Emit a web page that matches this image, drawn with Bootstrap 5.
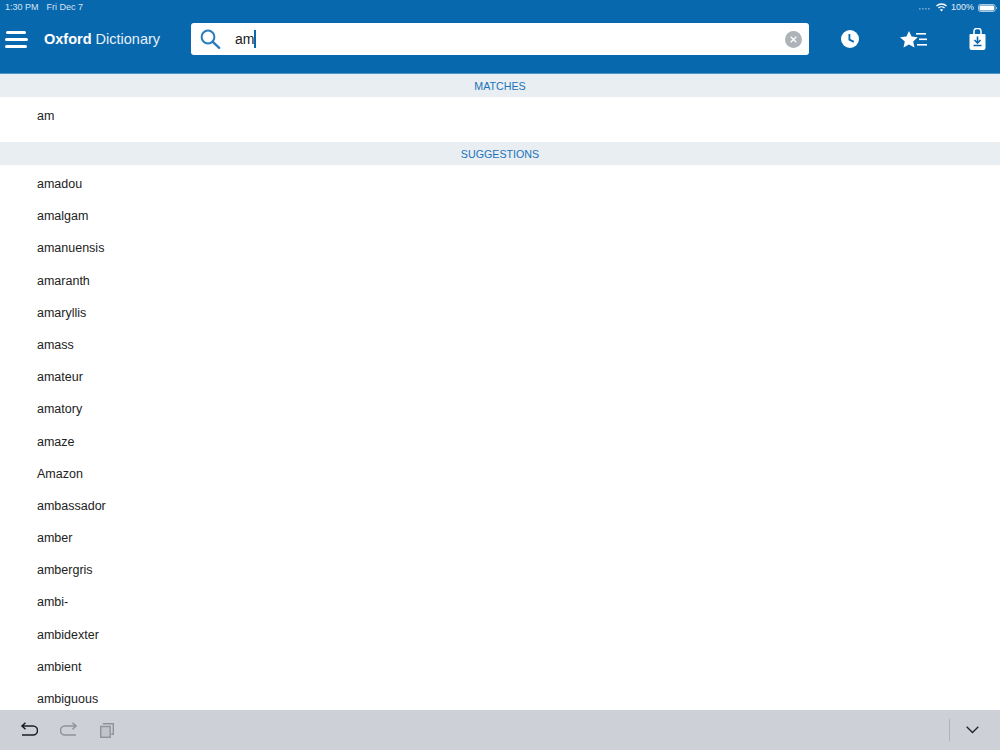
<!DOCTYPE html>
<html lang="en">
<head>
<meta charset="utf-8">
<title>Oxford Dictionary</title>
<link href="https://cdn.jsdelivr.net/npm/bootstrap@5.3.0/dist/css/bootstrap.min.css" rel="stylesheet">
<style>
html,body{height:100%;overflow:hidden}
body{font-family:"Liberation Sans",Arial,sans-serif;color:#222;background:#fff}
.app-shell{height:750px}
.top-head{background:#0868ad;border-bottom:1px solid #4d94c8;height:74px;color:#fff;flex:none}
.status-row{height:15px;font-size:9px;padding:0 0 0 5px;color:#d5e5f2;line-height:15px}
.status-right{color:#e4eef6;padding-right:3px}
.tool-row{height:32px;margin-top:8px}
.menu-btn{width:44px;padding-left:5px}
.brand-name{font-size:14.5px;width:147px;padding-top:1px;color:#e6f0f8;white-space:nowrap}
.brand-name b{color:#fff}
.search-box{width:618px;height:32px;background:#fff;border-radius:3px;padding:0 7px 0 9px}
.search-text{font-size:14px;color:#222;margin-left:14px;line-height:18px}
.caret-bar{display:inline-block;width:1.5px;height:18px;background:#0868ad;vertical-align:-4px}
.tool-icons{flex:1;padding-left:32px;padding-right:14px}
.sec-head{height:23px;line-height:24px;background:#e9eef2;color:#1a73b8;font-size:10.7px;text-align:center;flex:none}
.word-list{margin:0;padding:0;list-style:none}
.word-list li{height:32.19px;line-height:32.19px;padding-left:37px;font-size:12.5px;color:#222}
.match-wrap{padding-top:3px;height:45px;flex:none}
.sugg-wrap{flex:1;min-height:0;overflow:hidden;padding-top:3px}
.key-bar{height:40px;flex:none;background:#cdd0d6;padding:0 21px 0 20px}
.key-left{gap:22px}
.key-sep{width:1px;height:22px;background:#b0b3b9;margin-right:16px}
</style>
</head>
<body>
<div class="app-shell d-flex flex-column">
  <header class="top-head">
    <div class="status-row d-flex justify-content-between">
      <div class="d-flex gap-2"><span>1:30 PM</span><span>Fri Dec 7</span></div>
      <div class="status-right d-flex align-items-center gap-1">
        <svg width="13" height="5" viewBox="0 0 13 5"><g fill="#6ea5cf"><rect x="0" y="3" width="1.6" height="1.6"/><rect x="3" y="3" width="1.6" height="1.6"/><rect x="6" y="3" width="1.6" height="1.6"/><rect x="9" y="3" width="1.6" height="1.6"/></g></svg>
        <svg width="11" height="9" viewBox="0 0 11 9"><path d="M5.5 8.5 3.9 6.7a2.3 2.3 0 0 1 3.2 0ZM2.9 5.6 2 4.6a5 5 0 0 1 7 0l-.9 1a3.7 3.7 0 0 0-5.2 0ZM1 3.6 0 2.6a7.8 7.8 0 0 1 11 0l-1 1a6.4 6.4 0 0 0-9 0Z" fill="#fff"/></svg>
        <span>100%</span>
        <svg width="19" height="8" viewBox="0 0 19 8"><rect x=".5" y=".5" width="16.5" height="7" rx="1.8" fill="none" stroke="#a9cbe4"/><rect x="1.5" y="1.5" width="14.5" height="5" rx="1" fill="#fff"/><path d="M18 2.8c.6.2 1 .6 1 1.2s-.4 1-1 1.2Z" fill="#a9cbe4"/></svg>
      </div>
    </div>
    <div class="tool-row d-flex align-items-center">
      <div class="menu-btn">
        <svg width="23" height="17" viewBox="0 0 23 17" class="d-block"><g fill="#fff"><rect x="1" y="0" width="20" height="3" rx="1.5"/><rect x="0" y="7" width="23" height="3" rx="1.5"/><rect x="0" y="14" width="22" height="3" rx="1.5"/></g></svg>
      </div>
      <div class="brand-name"><b>Oxford</b> Dictionary</div>
      <div class="search-box d-flex align-items-center">
        <svg width="21" height="20" viewBox="0 0 21 20"><circle cx="8" cy="8" r="6.4" fill="none" stroke="#2a7dbc" stroke-width="2"/><path d="m12.8 12.8 6.4 6" stroke="#2a7dbc" stroke-width="2.4" stroke-linecap="round"/></svg>
        <div class="search-text flex-grow-1">am<span class="caret-bar"></span></div>
        <svg width="17" height="17" viewBox="0 0 17 17"><circle cx="8.5" cy="8.5" r="8.5" fill="#adb3b8"/><path d="m5.7 5.7 5.6 5.6m0-5.600-5.600 5.600" stroke="#fff" stroke-width="1.3"/></svg>
      </div>
      <div class="tool-icons d-flex justify-content-between align-items-center">
        <svg width="18" height="18" viewBox="0 0 18 18"><circle cx="9" cy="9" r="9" fill="#fff"/><path d="M8.4 4v5.600l4.400 2.300" fill="none" stroke="#0868ad" stroke-width="1.800"/></svg>
        <svg width="28" height="17" viewBox="0 0 28 17"><path d="M9 0l2.600 5.600 6.200.7-4.600 4.200 1.300 6.100L9 13.500l-5.500 3.100 1.300-6.100L0 6.300l6.400-.7Z" fill="#fff"/><g fill="#fff"><rect x="16" y="2" width="10" height="1.600"/><rect x="19" y="7.500" width="8" height="1.600"/><rect x="17" y="13" width="10" height="1.600"/></g></svg>
        <svg width="17" height="22" viewBox="0 0 17 22"><path d="M1.500 6h14a1 1 0 0 1 1 1v13a2 2 0 0 1-2 2h-12a2 2 0 0 1-2-2V7a1 1 0 0 1 1-1Z" fill="#fff"/><path d="M5 8V3a2.500 2.500 0 0 1 2.500-2.500h2A2.500 2.500 0 0 1 12 3v5" fill="none" stroke="#fff" stroke-width="1.500"/><path d="M8.500 8.500v6M5.500 12l3 3 3-3M4.500 17.500h8" fill="none" stroke="#0868ad" stroke-width="1.600"/></svg>
      </div>
    </div>
  </header>
  <div class="sec-head">MATCHES</div>
  <div class="match-wrap"><ul class="word-list"><li>am</li></ul></div>
  <div class="sec-head">SUGGESTIONS</div>
  <div class="sugg-wrap">
    <ul class="word-list">
      <li>amadou</li><li>amalgam</li><li>amanuensis</li><li>amaranth</li><li>amaryllis</li><li>amass</li><li>amateur</li><li>amatory</li><li>amaze</li><li>Amazon</li><li>ambassador</li><li>amber</li><li>ambergris</li><li>ambi-</li><li>ambidexter</li><li>ambient</li><li>ambiguous</li>
    </ul>
  </div>
  <footer class="key-bar d-flex align-items-center justify-content-between">
    <div class="key-left d-flex align-items-center">
      <svg width="18" height="16" viewBox="0 0 18 16"><path d="M2 4h11a4 4 0 0 1 0 9H2M5.500 .8 2 4l3.500 3.200" fill="none" stroke="#1e1e22" stroke-width="1.500"/></svg>
      <svg width="18" height="16" viewBox="0 0 18 16"><path d="M16 4H5a4 4 0 0 0 0 9h11M12.500 .8 16 4l-3.500 3.200" fill="none" stroke="#8f9296" stroke-width="1.500"/></svg>
      <svg width="14" height="15" viewBox="0 0 14 15"><rect x=".7" y="3.500" width="9.500" height="10.800" fill="#8f929633" stroke="#8f9296" stroke-width="1.400"/><path d="M3.500 1.500V.7h9.800v10.500h-2" fill="none" stroke="#8f9296" stroke-width="1.400"/></svg>
    </div>
    <div class="d-flex align-items-center">
      <div class="key-sep"></div>
      <svg width="13" height="8" viewBox="0 0 13 8"><path d="m.7.8 5.800 5.700L12.300.8" fill="none" stroke="#222" stroke-width="1.300"/></svg>
    </div>
  </footer>
</div>
<script src="https://cdn.jsdelivr.net/npm/bootstrap@5.3.0/dist/js/bootstrap.bundle.min.js"></script>
</body>
</html>
